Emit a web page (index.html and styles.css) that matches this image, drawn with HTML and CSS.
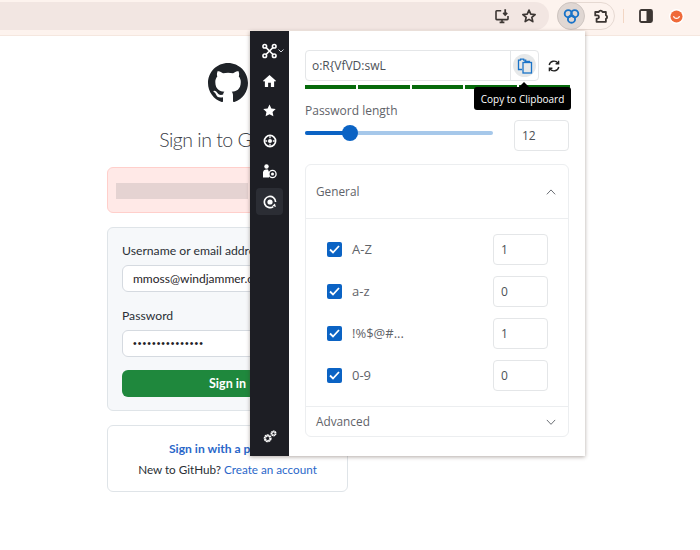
FILE: index.html
```html
<!DOCTYPE html>
<html lang="en">
<head>
<meta charset="utf-8">
<title>Sign in to GitHub</title>
<link rel="stylesheet" href="styles.css">
</head>
<body>
<header class="toolbar">
  <div class="addressbar">
    <svg class="tb-icon" width="16" height="16" viewBox="0 0 20 20" fill="none" stroke="#3c3633" stroke-width="2"><path d="M9 3.500H3.500a1 1 0 0 0-1 1v9a1 1 0 0 0 1 1h13a1 1 0 0 0 1-1V10"/><path d="M7 18h6M10 14.500V18"/><path d="M14 1.500v7M11.500 6.200 14 8.800l2.500-2.600" stroke-width="2.200"/></svg>
    <svg class="tb-icon" width="16" height="16" viewBox="0 0 18 18" fill="none" stroke="#3c3633" stroke-width="1.900" stroke-linejoin="round"><path d="M9 2.300l2 4.500 4.900.5-3.700 3.200 1.100 4.800L9 12.800l-4.300 2.500 1.100-4.800L2.100 7.300 7 6.800z"/></svg>
  </div>
  <div class="ext-pill">
    <div class="ext-active">
      <svg width="17" height="17" viewBox="0 0 18 18" fill="none" stroke="#1a73c8" stroke-width="2"><circle cx="5.600" cy="6" r="3.800"/><circle cx="12.400" cy="6" r="3.800"/><circle cx="9" cy="11.800" r="3.800"/></svg>
    </div>
    <svg class="ext-puzzle" width="16" height="16" viewBox="0 0 18 18" fill="none" stroke="#3c3633" stroke-width="2" stroke-linejoin="round"><path d="M2.500 4.500h4a2.200 2.200 0 0 1 4.200 0h3.800v3.700a2.200 2.200 0 0 1 0 4.100v3.200H4v-3.600h.9a1.800 1.800 0 0 0 0-3.600H2.500z"/></svg>
  </div>
  <div class="tb-sep"></div>
  <svg class="tb-side" width="14" height="14" viewBox="0 0 14 14"><rect x="1" y="1" width="12" height="12" rx="1.500" fill="none" stroke="#3c3633" stroke-width="1.800"/><rect x="7.500" y="1" width="5.500" height="12" fill="#3c3633"/></svg>
  <div class="avatar"><svg width="13" height="13" viewBox="0 0 14 14"><circle cx="7" cy="7" r="6.500" fill="#ef6a3a"/><path d="M3.800 6.500a3.300 3.300 0 0 0 6.400 0" fill="none" stroke="#fff" stroke-width="1.200"/></svg></div>
</header>

<main class="login">
  <svg class="gh-logo" width="40" height="40" viewBox="0 0 16 16" fill="#1f2328"><path d="M8 0C3.58 0 0 3.58 0 8c0 3.54 2.29 6.53 5.47 7.59.4.07.55-.17.55-.38 0-.19-.01-.82-.01-1.49-2.01.37-2.53-.49-2.69-.94-.09-.23-.48-.94-.82-1.13-.28-.15-.68-.52-.01-.53.63-.01 1.08.58 1.23.82.72 1.21 1.87.87 2.33.66.07-.52.28-.87.51-1.07-1.78-.2-3.64-.89-3.64-3.95 0-.87.31-1.59.82-2.15-.08-.2-.36-1.02.08-2.12 0 0 .67-.21 2.2.82.64-.18 1.32-.27 2-.27.68 0 1.36.09 2 .27 1.53-1.04 2.2-.82 2.2-.82.44 1.1.16 1.92.08 2.12.51.56.82 1.27.82 2.15 0 3.07-1.87 3.75-3.65 3.95.29.25.54.73.54 1.48 0 1.07-.01 1.93-.01 2.2 0 .21.15.46.55.38A8.013 8.013 0 0016 8c0-4.420-3.580-8-8-8z"/></svg>
  <h1 class="gh-title">Sign in to GitHub</h1>
  <div class="gh-alert"><div class="gh-alert-blur"></div></div>
  <form class="gh-form">
    <div class="gh-label">Username or email address</div>
    <div class="gh-input">mmoss@windjammer.com</div>
    <div class="gh-label gh-label-pw">Password</div>
    <div class="gh-input gh-dots">•••••••••••••••</div>
    <div class="gh-button">Sign in</div>
  </form>
  <div class="gh-box">
    <div class="gh-passkey">Sign in with a passkey</div>
    <div class="gh-new">New to GitHub? <span class="gh-link">Create an account</span></div>
  </div>
</main>

<aside class="popup">
  <nav class="sidebar">
    <div class="side-logo">
      <svg width="18" height="18" viewBox="0 0 19 19" fill="none" stroke="#fff" stroke-width="2"><path d="M4 4l5 5M15 4 9.500 9.500M4 15l5.500-5.500M15 15l-5.500-5.500"/><circle cx="3.500" cy="3.500" r="2.300" fill="#1e2027"/><circle cx="15.500" cy="3.500" r="2.300" fill="#1e2027"/><circle cx="3.500" cy="15.500" r="2.300" fill="#1e2027"/><circle cx="15.500" cy="15.500" r="2.300" fill="#1e2027"/></svg>
      <svg class="side-caret" width="6" height="4" viewBox="0 0 6 4" fill="none" stroke="#cfd2d8" stroke-width="1"><path d="M.5.500 3 3 5.500.500"/></svg>
    </div>
    <div class="side-item"><svg width="13" height="12" viewBox="0 0 14 13" fill="#fff"><path d="M7 0 0 6.300 1 7.400l1-.9V13h3.500V8.500h3V13H12V6.500l1 .9 1-1.100z"/></svg></div>
    <div class="side-item"><svg width="13" height="13" viewBox="0 0 14 14" fill="#fff"><path d="M7 .500l2 4.300 4.700.6-3.400 3.200.9 4.700L7 11l-4.200 2.300.9-4.700L.3 5.400 5 4.800z"/></svg></div>
    <div class="side-item"><svg width="14" height="14" viewBox="0 0 15 15" fill="none" stroke="#fff"><circle cx="7.500" cy="7.500" r="6" stroke-width="1.800"/><circle cx="7.500" cy="7.500" r="2.200" fill="#fff" stroke="none"/><path d="M7.500 2.500v2M7.500 10.500v2M2.500 7.500h2M10.500 7.500h2" stroke-width="1.400"/></svg></div>
    <div class="side-item"><svg width="15" height="15" viewBox="0 0 15 15"><circle cx="4.500" cy="2.500" r="2.200" fill="#fff"/><path d="M1 13.500V8a3 3 0 0 1 3-2.500h2L7 8v5.500z" fill="#fff"/><circle cx="10.500" cy="10" r="3.600" fill="#1e2027" stroke="#fff" stroke-width="1.300"/><circle cx="10.500" cy="10" r="1.500" fill="#fff"/></svg></div>
    <div class="side-item side-active"><svg width="14" height="14" viewBox="0 0 15 15" fill="none" stroke="#fff"><path d="M13.500 7.500a6 6 0 1 0-2.500 4.900" stroke-width="1.800"/><path d="M13.800 12.800 10 11.600l2.800-2.600z" fill="#fff" stroke="none"/><circle cx="7.500" cy="7.500" r="2.800" fill="#fff" stroke="none"/></svg></div>
    <div class="side-gears"><svg width="14" height="13" viewBox="0 0 15 14" fill="none" stroke="#fff"><circle cx="5" cy="9" r="3" stroke-width="2.600" stroke-dasharray="1.800 .4"/><circle cx="11.300" cy="3.700" r="2.100" stroke-width="2.200" stroke-dasharray="1.400 .3"/></svg></div>
  </nav>
  <section class="panel">
    <div class="pw-row">
      <div class="pw-field">
        <div class="pw-value">o:R{VfVD:swL</div>
        <div class="pw-copy">
          <div class="copy-circle">
            <svg width="16" height="16" viewBox="0 0 16 16" fill="none" stroke="#1a73c8" stroke-width="1.300"><path d="M5 11.500H1.500V2.200h2V1.200h3.200v1h2v1.800"/><rect x="6" y="4.500" width="8.500" height="10.500" fill="#e6e8e9"/><path d="M8 4.500V3.500h4.500v1"/></svg>
          </div>
        </div>
      </div>
      <svg class="pw-refresh" width="12" height="12" viewBox="0 0 12 12" fill="none" stroke="#222" stroke-width="1.400"><path d="M1.200 5A4.900 4.900 0 0 1 10 3.200M10.800 7A4.900 4.900 0 0 1 2 8.800"/><path d="M10.600.700v3H7.600M1.400 11.300v-3h3"/></svg>
    </div>
    <div class="strength">
      <span class="seg"></span><span class="seg"></span><span class="seg"></span><span class="seg"></span><span class="seg"></span>
    </div>
    <div class="len-label">Password length</div>
    <div class="len-row">
      <div class="slider"><div class="slider-fill"></div><div class="slider-thumb"></div></div>
      <div class="num-box num-len">12</div>
    </div>
    <div class="accordion">
      <div class="acc-head acc-general">
        <span class="acc-title">General</span>
        <svg width="10" height="6" viewBox="0 0 12 7" fill="none" stroke="#6b6f75" stroke-width="1.200"><path d="M1 6.300 6 1l5 5.300"/></svg>
      </div>
      <div class="acc-body">
        <div class="opt"><span class="check"><svg width="11" height="9" viewBox="0 0 11 9" fill="none" stroke="#fff" stroke-width="1.800"><path d="M1 4.500l3 3 6-6.500"/></svg></span><span class="opt-label">A-Z</span><div class="num-box num-opt">1</div></div>
        <div class="opt"><span class="check"><svg width="11" height="9" viewBox="0 0 11 9" fill="none" stroke="#fff" stroke-width="1.800"><path d="M1 4.500l3 3 6-6.500"/></svg></span><span class="opt-label">a-z</span><div class="num-box num-opt">0</div></div>
        <div class="opt"><span class="check"><svg width="11" height="9" viewBox="0 0 11 9" fill="none" stroke="#fff" stroke-width="1.800"><path d="M1 4.500l3 3 6-6.500"/></svg></span><span class="opt-label">!%$@#...</span><div class="num-box num-opt">1</div></div>
        <div class="opt"><span class="check"><svg width="11" height="9" viewBox="0 0 11 9" fill="none" stroke="#fff" stroke-width="1.800"><path d="M1 4.500l3 3 6-6.500"/></svg></span><span class="opt-label">0-9</span><div class="num-box num-opt">0</div></div>
      </div>
      <div class="acc-head acc-advanced">
        <span class="acc-title">Advanced</span>
        <svg width="10" height="6" viewBox="0 0 12 7" fill="none" stroke="#6b6f75" stroke-width="1.200"><path d="M1 1l5 5.300L11 1"/></svg>
      </div>
    </div>
    <div class="tooltip"><span class="tooltip-arrow"></span>Copy to Clipboard</div>
  </section>
</aside>
</body>
</html>
```
FILE: styles.css
```css
* { box-sizing: border-box; }
html, body { margin: 0; height: 550px; overflow: hidden; background: #fff; }
body { position: relative; font-family: "Open Sans", "Noto Sans", sans-serif; color: #5f6369; }

/* browser chrome */
.toolbar {
  height: 36px;
  background: #fdf3ee;
  border-bottom: 1px solid #f5e7df;
  display: flex;
  align-items: flex-start;
  padding-top: 2px;
}
.addressbar {
  width: 549px;
  height: 28px;
  background: #f2e6e2;
  border-radius: 0 14px 14px 0;
  display: flex;
  align-items: center;
  justify-content: flex-end;
  padding-right: 12px;
  gap: 11px;
}
.tb-icon { display: block; }
.ext-pill {
  margin-left: 8px;
  width: 58px;
  height: 28px;
  border: 1px solid #e6d9d2;
  border-radius: 14px;
  display: flex;
  align-items: center;
}
.ext-active {
  width: 28px;
  height: 28px;
  margin-left: -1px;
  border-radius: 50%;
  background: #e0d7d3;
  border: 1px solid #cfc6c2;
  display: flex;
  align-items: center;
  justify-content: center;
}
.ext-puzzle { margin-left: 8px; }
.tb-sep { width: 1px; height: 14px; background: #f2d6c4; margin: 7px 0 0 8px; }
.tb-side { margin: 7px 0 0 15px; }
.avatar {
  width: 15px;
  height: 15px;
  margin: 7px 0 0 16px;
  background: #fff;
  border-radius: 50%;
  display: flex;
  align-items: center;
  justify-content: center;
}

/* github page */
.login {
  width: 241px;
  margin-left: 107px;
  display: flex;
  flex-direction: column;
  align-items: stretch;
  font-family: "Lato", "Noto Sans", sans-serif;
  color: #1f2328;
}
.gh-logo { display: block; margin: 27px auto 0; }
.gh-title {
  margin: 24px 0 0;
  font-size: 19.500px;
  letter-spacing: -0.500px;
  line-height: 26px;
  font-weight: 300;
  text-align: center;
  white-space: nowrap;
  color: #3a4047;
}
.gh-alert {
  margin-top: 14px;
  height: 46px;
  background: #ffe9e7;
  border: 1px solid #ffcfcb;
  border-radius: 6px;
  padding: 15px 8px;
}
.gh-alert-blur { width: 132px; height: 16px; background: #e5d3d2; }
.gh-form {
  margin-top: 14px;
  height: 184px;
  background: #f6f8fa;
  border: 1px solid #dfe4e8;
  border-radius: 6px;
  padding: 14px 14px 0;
}
.gh-label { font-size: 12.200px; line-height: 17px; color: #2a2f35; white-space: nowrap; }
.gh-label-pw { margin-top: 15px; }
.gh-input {
  margin-top: 6px;
  height: 27px;
  background: #fff;
  border: 1px solid #d5dae0;
  border-radius: 6px;
  padding: 0 10px;
  font-size: 12px;
  line-height: 25px;
  color: #1f2328;
  white-space: nowrap;
  overflow: hidden;
}
.gh-dots { font-family: "Liberation Sans", sans-serif; font-size: 10.500px; letter-spacing: 1.050px; }
.gh-button {
  margin-top: 13px;
  height: 27px;
  background: #1f883d;
  border-radius: 6px;
  color: #fff;
  font-size: 12.500px;
  font-weight: 700;
  line-height: 27px;
  text-align: center;
}
.gh-box {
  margin-top: 14px;
  height: 67px;
  border: 1px solid #dfe4e8;
  border-radius: 6px;
  text-align: center;
  padding-top: 14px;
}
.gh-passkey { font-size: 12.100px; line-height: 17px; font-weight: 700; color: #2a67c9; }
.gh-new { margin-top: 4px; font-size: 11.700px; line-height: 17px; color: #2a2f35; white-space: nowrap; }
.gh-link { color: #2a67c9; }

/* extension popup */
.popup {
  position: absolute;
  left: 250px;
  top: 31px;
  width: 335px;
  height: 425px;
  display: flex;
  background: #fff;
  box-shadow: 0 1px 4px rgba(60, 40, 30, 0.4);
}
.sidebar {
  width: 40px;
  background: #1d1e24;
  display: flex;
  flex-direction: column;
  align-items: center;
  padding-top: 10px;
}
.side-logo {
  width: 28px;
  height: 19px;
  display: flex;
  align-items: center;
  padding-left: 6px;
  gap: 1px;
  margin-bottom: 7px;
}
.side-caret { flex: none; }
.side-item {
  width: 27px;
  height: 27px;
  margin-bottom: 3.250px;
  display: flex;
  align-items: center;
  justify-content: center;
  border-radius: 4px;
}
.side-active { background: #2b2d34; }
.side-gears { margin-top: auto; margin-bottom: 17px; height: 13px; }
.panel {
  position: relative;
  flex: 1;
  padding: 19px 15px 0 16px;
}
.pw-row { display: flex; align-items: center; }
.pw-field {
  width: 234px;
  height: 31px;
  border: 1px solid #e4e6e8;
  border-radius: 4px;
  display: flex;
}
.pw-value { flex: 1; padding-left: 6px; font-size: 12px; line-height: 29px; color: #4c5157; }
.pw-copy {
  width: 28px;
  border-left: 1px solid #e4e6e8;
  display: flex;
  align-items: center;
  justify-content: center;
}
.copy-circle {
  width: 23px;
  height: 23px;
  border-radius: 50%;
  background: #e6e8e9;
  display: flex;
  align-items: center;
  justify-content: center;
}
.pw-refresh { margin-left: 9px; }
.strength { margin-top: 4px; display: flex; gap: 2px; width: 265px; }
.seg { flex: 1; height: 4px; background: #066a0b; }
.len-label { margin-top: 13px; font-size: 12px; line-height: 18px; color: #5f6369; }
.len-row { display: flex; align-items: center; justify-content: space-between; width: 264px; }
.slider {
  position: relative;
  width: 188px;
  height: 4px;
  border-radius: 2px;
  background: #a6c8ea;
  margin-top: -5px;
}
.slider-fill { width: 45px; height: 4px; border-radius: 2px; background: #0b63c4; }
.slider-thumb {
  position: absolute;
  left: 37px;
  top: -6px;
  width: 16px;
  height: 16px;
  border-radius: 50%;
  background: #0b63c4;
}
.num-box {
  width: 55px;
  height: 31px;
  border: 1px solid #e4e6e8;
  border-radius: 4px;
  padding-left: 7px;
  font-size: 12px;
  line-height: 29px;
  color: #4c5157;
}
.accordion {
  margin-top: 13px;
  width: 264px;
  height: 273px;
  border: 1px solid #eceef0;
  border-radius: 6px;
  display: flex;
  flex-direction: column;
}
.acc-head {
  display: flex;
  align-items: center;
  justify-content: space-between;
  padding: 0 12px 0 10px;
  font-size: 11.800px;
  color: #5f6369;
}
.acc-title { padding-bottom: 2px; }
.acc-general { height: 54px; border-bottom: 1px solid #eceef0; }
.acc-body { flex: 1; padding: 15px 20px 0 21px; display: flex; flex-direction: column; gap: 11px; }
.acc-advanced { height: 30px; border-top: 1px solid #eceef0; }
.opt { display: flex; align-items: center; height: 31px; }
.check {
  width: 15px;
  height: 15px;
  border-radius: 2px;
  background: #0b63c4;
  display: flex;
  align-items: center;
  justify-content: center;
}
.opt-label { flex: 1; margin-left: 10px; padding-bottom: 2px; font-size: 13px; color: #5f6369; }
.tooltip {
  position: absolute;
  left: 185px;
  top: 56px;
  width: 97px;
  height: 23px;
  background: #000;
  border-radius: 3px;
  color: #fff;
  font-size: 10px;
  line-height: 24px;
  text-align: center;
  white-space: nowrap;
}
.tooltip-arrow {
  position: absolute;
  left: 45px;
  top: -5px;
  border-left: 5px solid transparent;
  border-right: 5px solid transparent;
  border-bottom: 5px solid #000;
}
```
